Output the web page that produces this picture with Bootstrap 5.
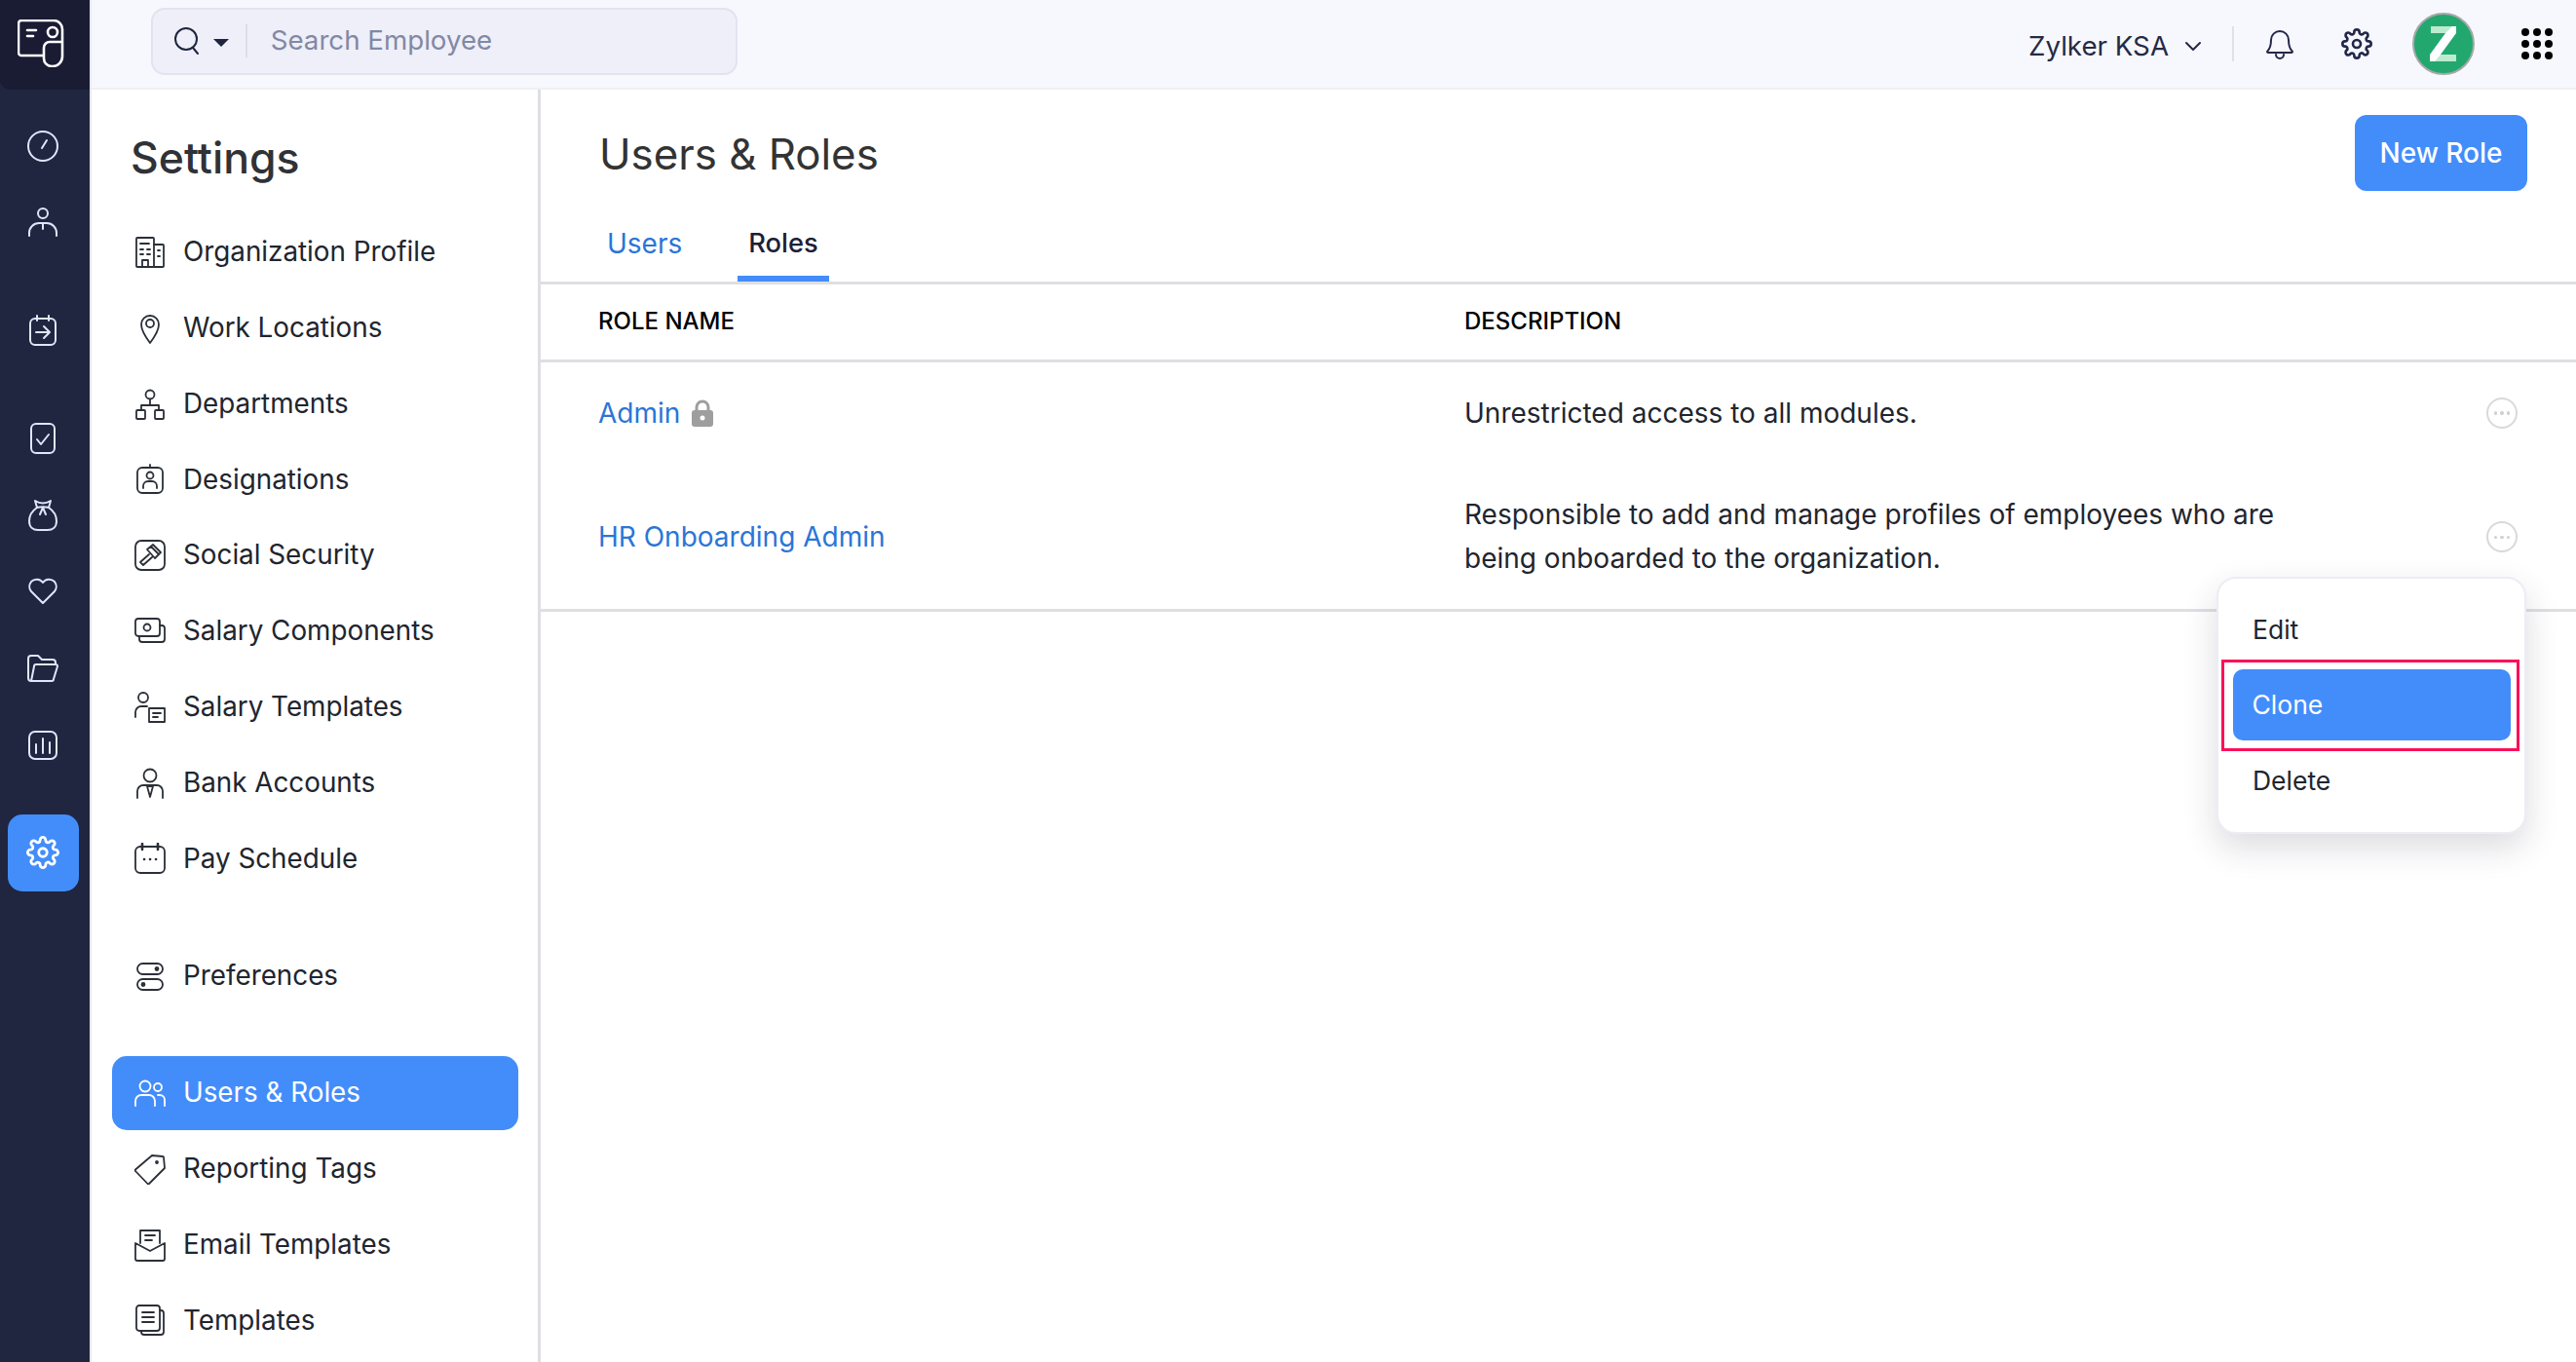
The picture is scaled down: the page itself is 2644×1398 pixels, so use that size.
<!doctype html>
<html lang="en">
<head>
<meta charset="utf-8">
<title>Users &amp; Roles</title>
<link rel="stylesheet" href="https://cdn.jsdelivr.net/npm/bootstrap@5.3.0/dist/css/bootstrap.min.css">
<style>
html,body{height:100%;overflow:hidden}
body{font-family:Inter,"Liberation Sans",sans-serif;font-size:28px;color:#21252e;background:#fff}
svg{display:block;flex:none;fill:none;stroke-linecap:round;stroke-linejoin:round}
.shell{height:1398px}
.rail{width:94px;flex:none;background:#20263f;border-right:2px solid #e6e7ec}
.rail-logo{height:92px;background:#191c33;border-bottom-left-radius:10px;padding:20px 0 0 18px}
.rail-list{padding:18.5px 11.5px 0 8px;margin:0;list-style:none;width:92px}
.rail-item{height:78.7px;display:flex;align-items:center;justify-content:center;border-radius:15px}
.rail-item svg{stroke:#dfe6fa;stroke-width:2}
.rail-gap{margin-top:32px}
.rail-on{background:#438dfb}
.rail-on svg{stroke:#fff}
.topbar{height:92px;background:#f7f8fd;border-bottom:2px solid #eff0f3;padding-left:61px;padding-right:24px}
.finder{width:602px;height:69px;background:#eeeff8;border:2px solid #e2e3ef;border-radius:14px;padding:0 0 0 20px;margin-bottom:6px}
.finder svg{stroke:#1f2540;stroke-width:2}
.finder-caret{width:0;height:0;border-left:8px solid transparent;border-right:8px solid transparent;border-top:8px solid #1f2540;margin:4px 0 0 12px}
.finder-line{width:2px;height:34px;background:#dcdde9;margin:0 26px 0 17px}
.finder input{background:transparent;border:0;padding:0;font-size:27.7px;color:#21252e;box-shadow:none;margin-left:-2px}
.finder input::placeholder{color:#8288a5;opacity:1}
.org{font-size:27.7px;color:#252a45;margin-top:6px}
.org svg{stroke:#252a45;stroke-width:2}
.bar-line{width:2px;height:36px;background:#dfe0e8;margin:0 32px 0 31px}
.bar-icon{stroke:#23284a;stroke-width:2}
.avatar{width:64px;height:64px;border-radius:50%;background:#22a86e;border:2px solid #a5a8a8;display:flex;align-items:center;justify-content:center;margin-left:41px}
.dots{display:grid;grid-template-columns:repeat(3,8px);gap:4px;margin-left:48px}
.dots i{width:8px;height:8px;border-radius:50%;background:#000;display:block}
.setpanel{width:461px;flex:none;border-right:3px solid #dedfe3;padding:0 20px 0 21px;height:1306px;overflow:hidden}
.setpanel h2{font-size:44.5px;font-weight:500;color:#2f3237;padding:45px 0 0 19px;margin:0 0 34px;line-height:50px}
.setnav .nav-link{height:76px;margin-bottom:1.8px;padding:0 0 0 23px;display:flex;align-items:center;gap:18px;color:#21252e;border-radius:15px;font-size:27.8px}
.setnav .nav-link svg{stroke:#2b2f38;stroke-width:1.8}
.setnav .nav-link.active{background:#438dfb;color:#fff}
.setnav .nav-link.active svg{stroke:#fff}
.setnav .nav-gap{margin-top:43px}
.setnav .nav-gap.active{margin-top:42px}
.pane{position:relative;min-width:0}
.pane-head{height:108px;padding:26px 50px 0 60px}
.pane-head h1{font-size:43.8px;font-weight:400;color:#333;margin:0;line-height:60px;padding-top:11px}
.pane-head .btn{width:177px;height:78px;background:#438dfb;border:0;border-radius:12px;font-size:28px;font-weight:500;color:#fff;padding:0}
.roletabs{height:93px;padding:0 0 0 57px;border-bottom:3px solid #dedfe3;gap:46px;flex-wrap:nowrap;margin-top:-1px}
.roletabs .nav-link{height:90px;padding:17px 11px 0;margin:0;border:0;border-bottom:6px solid transparent;border-radius:0;background:none;color:#2a75d8;font-size:28px;font-weight:400;display:flex;align-items:center}
.roletabs .nav-link.active{color:#1c2036;font-weight:500;font-size:27.3px;padding-top:19px;border-bottom-color:#438dfb;background:none}
.roles{margin:0;width:100%;table-layout:fixed;font-size:28px}
.roles th{height:78px;padding:0 0 0 59px;border-bottom:3px solid #dedfe3;font-size:24px;font-weight:500;color:#000;vertical-align:middle}
.roles th+th{padding-left:0}
.roles td{border:0;padding:0;vertical-align:middle;color:#21252e;box-shadow:none}
.roles td:first-child{padding-left:59px}
.roles td:nth-child(2){padding-right:150px}
.roles .row-one td{height:106px}
.roles .row-two td{height:150px;line-height:45px;padding-top:2px}
.roles .row-two{border-bottom:3px solid #dedfe3}
.roles a{color:#2a75d8;text-decoration:none}
.roles .col-main{width:948px}
.roles .col-act{width:92px}
.more{width:32px;height:32px;border-radius:50%;border:2px solid #d8d9dc;display:flex;align-items:center;justify-content:center;gap:3px}
.more i{width:3.5px;height:3.5px;border-radius:50%;background:#cfd0d3;display:block}
.rowmenu{display:block;position:absolute;top:500px;left:1720px;width:318px;height:264px;padding:0;margin:0;border:2px solid #ecedf5;border-radius:20px;box-shadow:0 14px 34px rgba(40,40,60,.16);background:#fff;font-size:26.5px;min-width:0}
.rowmenu .dropdown-item{height:60px;display:flex;align-items:center;padding:0 0 0 35px;color:#21252e;border-radius:10px;background:none}
.rowmenu .menu-first{margin-top:23px}
.mark-frame{border:3.5px solid #fb0f58;margin:0 5px 0 3px;padding:6.5px 6.5px 7.5px 8.5px;height:94px}
.rowmenu .mark-frame .dropdown-item{height:73px;background:#438dfb;color:#fff;padding:2px 0 0 20px}
.rowmenu .menu-last{height:62px}
</style>
</head>
<body>
<div class="shell d-flex">
  <aside class="rail">
    <div class="rail-logo">
      <svg width="48" height="49" viewBox="0 0 48 49" stroke="#fff" stroke-width="2.6">
        <path d="M27 37H4a3 3 0 0 1-3-3V4a3 3 0 0 1 3-3h33a9 9 0 0 1 9 9v28a10 10 0 0 1-10 10h-1a8 8 0 0 1-8-8V29a6 6 0 0 1 6-6h13"/>
        <path d="M10 11h9M10 17h6"/><circle cx="36" cy="13" r="5"/>
      </svg>
    </div>
    <ul class="rail-list">
      <li class="rail-item"><svg width="34" height="34" viewBox="0 0 34 34"><circle cx="17" cy="17" r="15"/><path d="M16 19l5-8"/></svg></li>
      <li class="rail-item"><svg width="34" height="34" viewBox="0 0 34 34"><circle cx="17" cy="7" r="5"/><path d="M3 30v-3a10 10 0 0 1 10-10h8a10 10 0 0 1 10 10v3M17 17v6"/></svg></li>
      <li class="rail-item rail-gap"><svg width="34" height="34" viewBox="0 0 34 34"><rect x="4" y="5" width="26" height="27" rx="5"/><path d="M11 2v5M23 2v5M10 19h14M18 13l6 6-6 6"/></svg></li>
      <li class="rail-item rail-gap"><svg width="30" height="34" viewBox="0 0 30 34"><rect x="3" y="2" width="24" height="30" rx="5"/><path d="M9 18l4 5 8-10"/></svg></li>
      <li class="rail-item"><svg width="32" height="34" viewBox="0 0 32 34"><path d="M10 9C4 13 2 19 2 23c0 6 4 9 9 9h10c5 0 9-3 9-9 0-4-2-10-8-14"/><path d="M8 2c5 3 11 3 16 0l-2 7c-4-1-8-1-12 0zM16 9l-3 7M16 9l3 7"/></svg></li>
      <li class="rail-item"><svg width="32" height="28" viewBox="0 0 32 28"><path d="M16 26L4 14a8 8 0 0 1 0-10 8 8 0 0 1 12 1 8 8 0 0 1 12-1 8 8 0 0 1 0 10z"/></svg></li>
      <li class="rail-item"><svg width="34" height="30" viewBox="0 0 34 30"><path d="M5 28a3 3 0 0 1-3-3V5a3 3 0 0 1 3-3h7l4 4h11a3 3 0 0 1 3 3v2"/><path d="M5 28h21a2 2 0 0 0 2-2l4-13a2 2 0 0 0-2-2H10a2 2 0 0 0-2 2L5 28z"/></svg></li>
      <li class="rail-item"><svg width="32" height="32" viewBox="0 0 32 32"><rect x="2" y="2" width="28" height="28" rx="6"/><path d="M9 15v9M16 9v15M23 13v11"/></svg></li>
      <li class="rail-item rail-gap rail-on"><svg width="34" height="36" viewBox="0 0 24 24" stroke-width="1.5"><circle cx="12" cy="12" r="3"/><path d="M19.4 15a1.7 1.7 0 0 0 .3 1.8l.1.1a2 2 0 1 1-2.8 2.8l-.1-.1a1.7 1.7 0 0 0-2.9 1.2V21a2 2 0 1 1-4 0v-.1a1.7 1.7 0 0 0-2.9-1.2l-.1.1a2 2 0 1 1-2.8-2.8l.1-.1a1.7 1.7 0 0 0-1.2-2.9H3a2 2 0 1 1 0-4h.1a1.7 1.7 0 0 0 1.2-2.9l-.1-.1a2 2 0 1 1 2.8-2.8l.1.1a1.7 1.7 0 0 0 2.9-1.2V3a2 2 0 1 1 4 0v.1a1.7 1.7 0 0 0 2.9 1.2l.1-.1a2 2 0 1 1 2.8 2.8l-.1.1a1.7 1.7 0 0 0 1.2 2.9h.1a2 2 0 1 1 0 4h-.1a1.7 1.7 0 0 0-1.5 1z"/></svg></li>
    </ul>
  </aside>
  <div class="flex-grow-1 d-flex flex-column" style="min-width:0">
    <header class="topbar d-flex align-items-center">
      <div class="finder d-flex align-items-center">
        <svg width="30" height="30" viewBox="0 0 30 30"><circle cx="14" cy="13" r="11"/><path d="M21 22l5 6"/></svg>
        <span class="finder-caret"></span><span class="finder-line"></span>
        <input class="form-control" type="text" placeholder="Search Employee" aria-label="Search Employee">
      </div>
      <div class="ms-auto d-flex align-items-center">
        <div class="org d-flex align-items-center gap-3"><span>Zylker KSA</span><svg width="18" height="12" viewBox="0 0 18 12"><path d="M2 2l7 7 7-7"/></svg></div>
        <span class="bar-line"></span>
        <svg class="bar-icon me-5" width="30" height="34" viewBox="0 0 30 34"><path d="M2 25c3-3 4-6 4-12a9 9 0 0 1 18 0c0 6 1 9 4 12a1 1 0 0 1-1 1H3a1 1 0 0 1-1-1z"/><path d="M11 28a4 4 0 0 0 8 0"/></svg>
        <svg class="bar-icon" width="32" height="34" viewBox="0 0 24 24" stroke-width="1.5"><circle cx="12" cy="12" r="3"/><path d="M19.4 15a1.7 1.7 0 0 0 .3 1.8l.1.1a2 2 0 1 1-2.8 2.8l-.1-.1a1.7 1.7 0 0 0-2.9 1.2V21a2 2 0 1 1-4 0v-.1a1.7 1.7 0 0 0-2.9-1.2l-.1.1a2 2 0 1 1-2.8-2.8l.1-.1a1.7 1.7 0 0 0-1.2-2.9H3a2 2 0 1 1 0-4h.1a1.7 1.7 0 0 0 1.2-2.9l-.1-.1a2 2 0 1 1 2.8-2.8l.1.1a1.7 1.7 0 0 0 2.9-1.2V3a2 2 0 1 1 4 0v.1a1.7 1.7 0 0 0 2.9 1.2l.1-.1a2 2 0 1 1 2.8 2.8l-.1.1a1.7 1.7 0 0 0 1.2 2.9h.1a2 2 0 1 1 0 4h-.1a1.7 1.7 0 0 0-1.5 1z"/></svg>
        <div class="avatar"><svg width="28" height="36" viewBox="0 0 28 36"><path d="M1 0h26v7L11 29h16v7H0v-7L16 7H1z" fill="#fff" stroke="none"/><path d="M1 0h22L16 7H1zM11 29h16v7H5z" fill="#bdebd0" stroke="none"/></svg></div>
        <div class="dots"><i></i><i></i><i></i><i></i><i></i><i></i><i></i><i></i><i></i></div>
      </div>
    </header>
    <div class="d-flex flex-grow-1" style="min-height:0">
      <nav class="setpanel">
        <h2>Settings</h2>
        <div class="nav nav-pills flex-column flex-nowrap setnav">
          <a class="nav-link" href="#"><svg width="32" height="32" viewBox="0 0 32 32"><rect x="2" y="1" width="18" height="30" rx="1"/><path d="M20 8h9a1 1 0 0 1 1 1v21a1 1 0 0 1-1 1h-9M6 7h9M6 13h3M13 13h3M6 18h3M13 18h3M8 31v-7h6v7M24 14h2M24 20h2"/></svg>Organization Profile</a>
          <a class="nav-link" href="#"><svg width="32" height="32" viewBox="0 0 32 32"><path d="M16 31C10 23 7 18 7 12a9 9 0 0 1 18 0c0 6-3 11-9 19z"/><circle cx="16" cy="11" r="4"/></svg>Work Locations</a>
          <a class="nav-link" href="#"><svg width="32" height="32" viewBox="0 0 32 32"><circle cx="16" cy="6" r="4.500"/><path d="M16 11v6M7 22v-5h18v5"/><rect x="2" y="22" width="9" height="9" rx="1"/><rect x="21" y="22" width="9" height="9" rx="1"/></svg>Departments</a>
          <a class="nav-link" href="#"><svg width="32" height="32" viewBox="0 0 32 32"><rect x="3" y="4" width="26" height="26" rx="5"/><path d="M16 1v3"/><circle cx="16" cy="12" r="3.500"/><path d="M9 25v-2a5 5 0 0 1 5-5h4a5 5 0 0 1 5 5v2"/></svg>Designations</a>
          <a class="nav-link" href="#"><svg width="32" height="32" viewBox="0 0 32 32"><rect x="1" y="1" width="30" height="30" rx="6"/><path d="M13 10l6-5 8 8-6 6zM15 15L6 23l3 3 9-8M17 7l8 8"/></svg>Social Security</a>
          <a class="nav-link" href="#"><svg width="32" height="32" viewBox="0 0 32 32"><rect x="1" y="3" width="25" height="18" rx="3"/><circle cx="13" cy="12" r="3.500"/><path d="M26 10h2a3 3 0 0 1 3 3v11a3 3 0 0 1-3 3H8a3 3 0 0 1-3-3v-3"/></svg>Salary Components</a>
          <a class="nav-link" href="#"><svg width="32" height="32" viewBox="0 0 32 32"><circle cx="9" cy="6" r="5"/><path d="M1 26v-5a6 6 0 0 1 6-6h6"/><rect x="15" y="17" width="16" height="14"/><path d="M19 22h8M19 26h5"/></svg>Salary Templates</a>
          <a class="nav-link" href="#"><svg width="32" height="32" viewBox="0 0 32 32"><circle cx="16" cy="8" r="6.500"/><path d="M3 31v-7a6 6 0 0 1 6-6h14a6 6 0 0 1 6 6v7M13 19l3 11 3-11z"/></svg>Bank Accounts</a>
          <a class="nav-link" href="#"><svg width="32" height="32" viewBox="0 0 32 32"><rect x="1" y="4" width="30" height="27" rx="5"/><path d="M8 1v6M24 1v6M10 17h.1M16 17h.1M22 17h.1" stroke-width="2.600"/></svg>Pay Schedule</a>
          <a class="nav-link nav-gap" href="#"><svg width="32" height="32" viewBox="0 0 32 32"><rect x="3" y="3" width="26" height="11" rx="5.500"/><rect x="3" y="19" width="26" height="11" rx="5.500"/><circle cx="23" cy="8.500" r="1.500" fill="#2b2f38"/><circle cx="9" cy="24.500" r="1.500" fill="#2b2f38"/></svg>Preferences</a>
          <a class="nav-link active nav-gap" href="#"><svg width="32" height="32" viewBox="0 0 32 32"><circle cx="11" cy="9" r="5.500"/><circle cx="24" cy="10" r="4"/><path d="M1 29v-5a6 6 0 0 1 6-6h8a6 6 0 0 1 6 6v5M24 18h2a5 5 0 0 1 5 5v6"/></svg>Users &amp; Roles</a>
          <a class="nav-link" href="#"><svg width="32" height="32" viewBox="0 0 32 32"><path d="M18 2l11 1a1 1 0 0 1 1 1l1 11-16 16a1 1 0 0 1-1.500 0L1 18a1 1 0 0 1 0-1.500z"/><circle cx="23" cy="9" r="1" fill="#2b2f38"/></svg>Reporting Tags</a>
          <a class="nav-link" href="#"><svg width="32" height="34" viewBox="0 0 32 34"><path d="M6 15V2h20v13M1 15v16a2 2 0 0 0 2 2h26a2 2 0 0 0 2-2V15l-15 8zM11 7h10M11 12h7"/></svg>Email Templates</a>
          <a class="nav-link" href="#"><svg width="32" height="32" viewBox="0 0 32 32"><rect x="2" y="1" width="24" height="26" rx="3"/><path d="M26 6h1a3 3 0 0 1 3 3v19a3 3 0 0 1-3 3H10a3 3 0 0 1-3-3v-1M8 8h12M8 13h12M8 18h12"/></svg>Templates</a>
        </div>
      </nav>
      <main class="pane flex-grow-1">
        <div class="pane-head d-flex justify-content-between align-items-start">
          <h1>Users &amp; Roles</h1>
          <button class="btn btn-primary" type="button">New Role</button>
        </div>
        <ul class="nav nav-tabs roletabs">
          <li class="nav-item"><a class="nav-link" href="#">Users</a></li>
          <li class="nav-item"><a class="nav-link active" href="#">Roles</a></li>
        </ul>
        <table class="table roles">
          <colgroup><col class="col-main"><col><col class="col-act"></colgroup>
          <thead><tr><th>ROLE NAME</th><th>DESCRIPTION</th><th></th></tr></thead>
          <tbody>
            <tr class="row-one">
              <td><span class="d-flex align-items-center gap-2"><a href="#">Admin</a><svg class="ms-1" width="22" height="28" viewBox="0 0 22 28"><path d="M5 13V8a6 6 0 0 1 12 0v5" stroke="#9e9e9e" stroke-width="3"/><rect x="0" y="11" width="22" height="17" rx="3" fill="#9e9e9e"/><circle cx="11" cy="19" r="2.500" fill="#fff"/></svg></span></td>
              <td>Unrestricted access to all modules.</td>
              <td><span class="more"><i></i><i></i><i></i></span></td>
            </tr>
            <tr class="row-two">
              <td><a href="#">HR Onboarding Admin</a></td>
              <td>Responsible to add and manage profiles of employees who are being onboarded to the organization.</td>
              <td><span class="more"><i></i><i></i><i></i></span></td>
            </tr>
          </tbody>
        </table>
        <div class="dropdown-menu rowmenu">
          <a class="dropdown-item menu-first" href="#">Edit</a>
          <div class="mark-frame"><a class="dropdown-item" href="#">Clone</a></div>
          <a class="dropdown-item menu-last" href="#">Delete</a>
        </div>
      </main>
    </div>
  </div>
</div>
<script src="https://cdn.jsdelivr.net/npm/bootstrap@5.3.0/dist/js/bootstrap.bundle.min.js"></script>
</body>
</html>
